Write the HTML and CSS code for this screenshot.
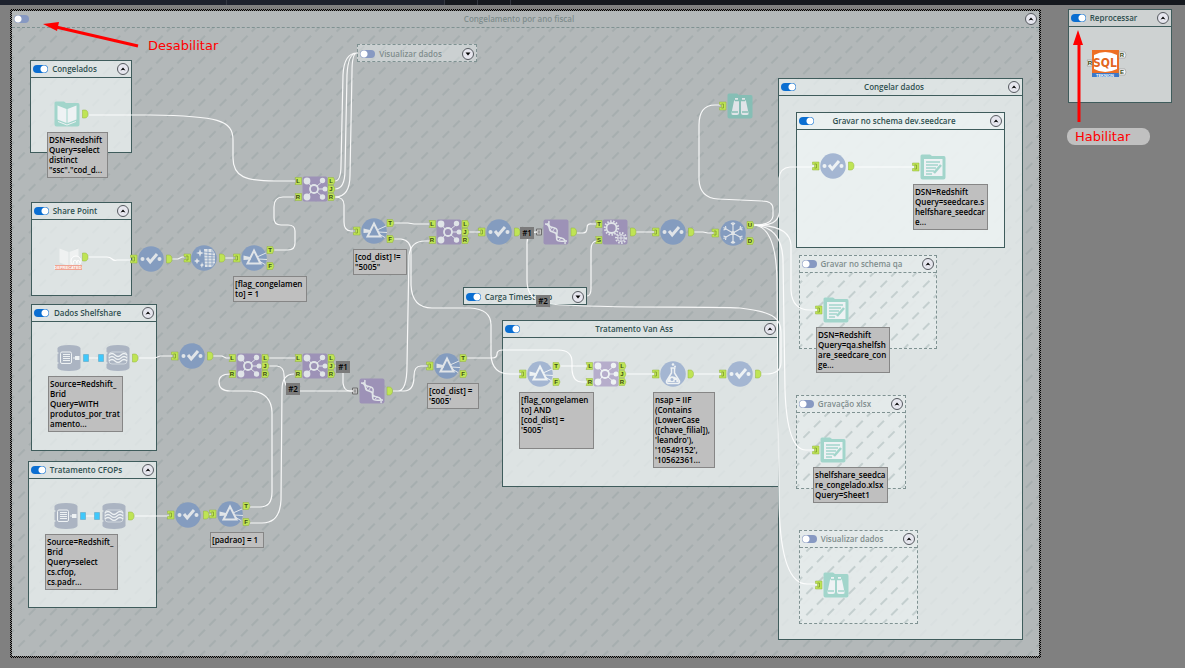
FILE: index.html
```html
<!DOCTYPE html>
<html lang="pt-BR">
<head>
<meta charset="utf-8">
<title>Congelamento por ano fiscal</title>
<link rel="stylesheet" href="styles.css">
</head>
<body>
<svg class="defs" aria-hidden="true">
  <defs>
    <pattern id="hatch" width="15" height="15" patternUnits="userSpaceOnUse" patternTransform="rotate(-45)">
      <path d="M2 7H11" class="hatch-line"/>
    </pattern>
    <g id="chev-up"><path d="M-4 2.5L0-2.5L4 2.5L0 1Z"/></g>
    <g id="chev-down"><path d="M-4-2.5L0 2.5L4-2.5Z"/></g>

    <g id="port-in"><path class="port" d="M-3-4H3.5V4H-3V1.5H-1V-1.5H-3Z"/><path class="port-mark" d="M-1-2H1V2H-1"/></g>
    <g id="port-out"><path class="port" d="M-2.5-4H0C4-4 4 4 0 4H-2.5Z"/></g>
    <g id="tag-in"><path class="port" d="M-3.5-3.5H3V3.5H-3.5L-2 0Z"/></g>
    <g id="tag-out"><path class="port" d="M-3-3.5H2.5L4 0L2.5 3.5H-3Z"/></g>
    <g id="port-multi"><path d="M-2.5-3H2.5V3H-2.5V1M-2.5-1V-3M0-1.5V1.5" class="multi"/></g>
    <g id="port-data"><path class="data" d="M-2.5-3.5H2.5V3.5H-2.5Z"/></g>

    <g id="select">
      <circle r="12.8" class="blue"/>
      <circle cx="-8.5" r="2" class="glyph"/><circle cx="8.5" r="2" class="glyph"/>
      <path class="line thick" d="M-4-1L-.8 3L6-5"/>
      <use href="#port-in" x="-17.5"/><use href="#port-out" x="18"/>
    </g>
    <g id="prism">
      <circle r="12.8" class="blue"/>
      <path class="glyph" d="M-10.5-2.5L-3-.8V1.5L-10.5 2Z"/>
      <path class="line fine" d="M3-1L12-5M4 1L13 1.500M5 3L11 6.500"/>
      <path class="line" d="M0-7.500L6.500 5.500H-6.500Z"/>
      <use href="#port-in" x="-17.5"/><use href="#tag-out" x="16" y="-8"/><use href="#tag-out" x="16" y="8"/>
    </g>
    <g id="cleanse">
      <circle r="12.8" class="blue"/>
      <path class="glyph" d="M-4-9L-3-6L0-5L-3-4L-4-1L-5-4L-8-5L-5-6ZM-7 0L-6 2L-4 3L-6 4L-7 6L-8 4L-10 3L-8 2ZM-2 4L-1.300 6L0 7L-1.500 8L-2 10L-3 8L-4 7L-2.500 6Z"/>
      <path class="glyph" d="M0-9H8L11-4V5L8 9H1Z"/>
      <path class="cut" d="M0-6L10-5M0-3L12-2M0 0H12M0 3H12M0 6H11M4-9V9M8-9V9"/>
      <use href="#port-in" x="-17"/><use href="#port-out" x="18"/>
    </g>
    <g id="unique">
      <circle r="12.8" class="blue"/>
      <g class="snow">
        <path d="M0-11V11M-9.500-5.500L9.500 5.500M-9.500 5.500L9.500-5.500M-2-10L0-8L2-10M-2 10L0 8L2 10M-9.500-3L-7-4L-7.500-7M9.500-3L7-4L7.500-7M-9.500 3L-7 4L-7.500 7M9.500 3L7 4L7.500 7"/>
      </g>
      <circle r="2" class="glyph"/>
      <use href="#port-in" x="-18"/><use href="#tag-out" x="17" y="-8"/><use href="#tag-out" x="17" y="8"/>
    </g>
    <g id="formula">
      <circle r="12.8" class="blue"/>
      <path class="line flask" d="M-2.500-6H2.500M-1.500-6V-1L-6.500 7Q-7 9.500-4 9.500H4Q7 9.500 6.500 7L1.500-1V-6"/>
      <path class="glyph" d="M-4 3Q0 1 4 4L6 8H-6Z"/><circle cx="0" cy="-9.500" r="1.300" class="glyph"/><circle cx="2" cy="-7.500" r="1" class="glyph"/>
      <circle cx="-1" cy="5.500" r="1.500" class="blue"/><circle cx="2.500" cy="7" r="1" class="blue"/>
      <use href="#port-in" x="-17.5"/><use href="#port-out" x="17.500"/>
    </g>
    <g id="join">
      <rect x="-12.5" y="-12.5" width="25" height="25" rx="2" class="purple"/>
      <path class="line fine" d="M-8-8L-4-3M-8 8L-4 3M2-3L8-8M3 0H10M2 3L8 8"/>
      <circle cx="-1" r="4" class="ring"/>
      <circle cx="-8" cy="-8" r="3.400" class="glyph"/><circle cx="-8" cy="8" r="3.400" class="glyph"/>
      <circle cx="7.500" cy="-8.500" r="2.700" class="glyph"/><circle cx="10" r="2.500" class="glyph"/><circle cx="7.500" cy="8" r="2.700" class="glyph"/>
      <use href="#tag-in" x="-16.5" y="-8"/><use href="#tag-in" x="-16.5" y="8"/>
      <use href="#tag-out" x="16" y="-8"/><use href="#tag-out" x="16"/><use href="#tag-out" x="16" y="8"/>
    </g>
    <g id="union">
      <rect x="-12.5" y="-12.5" width="25" height="25" rx="2" class="purple"/>
      <path class="line dna" d="M-7-11C-8-6-6-5-3-4.500S2-3 1 1S2 5.500 5 6S10 8 9 12M-11-8C-6-8-7-3-6-1.500S-1 0 0 1.500S0 6 1 8S6 9 11 9"/>
      <path class="line fine" d="M-9-9L-7.500-6.500M-6-2L-4-4.500M-3.500-.5L-1-4M1 6L3 5M3 8L5.500 6"/>
      <use href="#port-multi" x="-17"/><use href="#port-out" x="17.500"/>
    </g>
    <g id="append">
      <rect x="-12.5" y="-12.5" width="25" height="25" rx="2" class="purple"/>
      <circle cx="-3.500" cy="-4" r="5" class="ring"/><circle cx="-3.500" cy="-4" r="6.700" class="teeth"/>
      <circle cx="6" cy="6" r="3.500" class="ring small"/><circle cx="6" cy="6" r="5" class="teeth"/>
      <path class="line fine" d="M6 3V9M3 6H9"/>
      <use href="#tag-in" x="-16" y="-8"/><use href="#tag-in" x="-16" y="8"/><use href="#port-out" x="18"/>
    </g>
    <g id="folder"><path class="teal" d="M-12.500-11Q-12.500-12.500-11-12.500H-3L-1-11H11Q12.500-11 12.500-9V10.500Q12.500 12.500 10.500 12.500H-10.500Q-12.500 12.500-12.500 10.500Z"/></g>
    <path id="book" d="M-.5-5L-9.500-8.500V5.500L-.5 9ZM.5-5L9.500-8.500V5.500L.5 9Z"/>
    <g id="input"><use href="#folder"/><use href="#book" class="glyph"/><path class="line fine" d="M-9 7.500L0 11L9 7.500"/><use href="#port-out" x="18"/></g>
    <g id="output">
      <use href="#folder"/><rect x="-9" y="-8" width="18.500" height="17" class="glyph"/>
      <path class="pen" d="M-7-5H7M-7-2H5M-7 1H3M-7 4H1M-7 7H-1"/>
      <path class="pen nib" d="M8-2L1 6"/><use href="#port-in" x="-17.5"/>
    </g>
    <g id="browse">
      <use href="#folder"/>
      <path class="glyph" d="M-5-8H-2V-6L-1-5V7Q-1 9-3 9H-7Q-9 9-8.500 7L-6-5L-5-6ZM5-8H2V-6L1-5V7Q1 9 3 9H7Q9 9 8.500 7L6-5L5-6Z"/>
      <path class="pen" d="M-8 6H-2M2 6H8M-5-5.500H-1M1-5.500H5"/><use href="#port-in" x="-17.5"/>
    </g>
    <path id="drum" class="slate" d="M-11.500-10Q-10-13 0-13T11.500-10V10Q10 13 0 13T-11.500 10V6L-10 5L-11.500 4V-4L-10-5L-11.500-6Z"/>
    <g id="db-in">
      <use href="#drum"/><rect x="-8.500" y="-6" width="11" height="11.500" rx="1.500" class="ring small"/>
      <path class="line fine" d="M-6-3.500H1M-6-1.500H1M-6 .5H1M-6 2.500H1M4 0H7"/><rect x="6" y="-2" width="4.500" height="4" class="glyph"/>
      <use href="#port-data" x="17"/>
    </g>
    <g id="db-out">
      <use href="#drum"/><rect x="-9" y="-6" width="18" height="12" rx="3" class="wave"/>
      <path class="wave strong" d="M-9-3Q-6-6-3-3T3-3T9-3M-9 0Q-6-3-3 0T3 0T9 0M-9 3Q-6 0-3 3T3 3T9 3"/>
      <use href="#port-data" x="-17"/><use href="#port-out" x="17"/>
    </g>
  </defs>
</svg>

<div class="topbar" aria-hidden="true"><span></span><span></span><span></span><span></span></div>

<main class="canvas">
  <section class="box off outer"><header><input type="checkbox" id="t1"><label for="t1">Congelamento por ano fiscal</label><button type="button" aria-label="Recolher"><svg viewBox="-8 -8 16 16"><use href="#chev-up"/></svg></button></header><svg class="hatch"><rect width="100%" height="100%"/></svg></section>

  <section class="box congelados"><header><input type="checkbox" id="t2" checked><label for="t2">Congelados</label><button type="button" aria-label="Recolher"><svg viewBox="-8 -8 16 16"><use href="#chev-up"/></svg></button></header></section>
  <section class="box share"><header><input type="checkbox" id="t3" checked><label for="t3">Share Point</label><button type="button" aria-label="Recolher"><svg viewBox="-8 -8 16 16"><use href="#chev-up"/></svg></button></header></section>
  <section class="box shelf"><header><input type="checkbox" id="t4" checked><label for="t4">Dados Shelfshare</label><button type="button" aria-label="Recolher"><svg viewBox="-8 -8 16 16"><use href="#chev-up"/></svg></button></header></section>
  <section class="box cfops"><header><input type="checkbox" id="t5" checked><label for="t5">Tratamento CFOPs</label><button type="button" aria-label="Recolher"><svg viewBox="-8 -8 16 16"><use href="#chev-up"/></svg></button></header></section>
  <section class="box off closed view-top"><header><input type="checkbox" id="t6"><label for="t6">Visualizar dados</label><button type="button" aria-label="Expandir"><svg viewBox="-8 -8 16 16"><use href="#chev-down"/></svg></button></header></section>
  <section class="box closed carga"><header><input type="checkbox" id="t7" checked><label for="t7">Carga Timestamp</label><button type="button" aria-label="Expandir"><svg viewBox="-8 -8 16 16"><use href="#chev-down"/></svg></button></header></section>
  <section class="box vanass"><header><input type="checkbox" id="t8" checked><label for="t8">Tratamento Van Ass</label><button type="button" aria-label="Recolher"><svg viewBox="-8 -8 16 16"><use href="#chev-up"/></svg></button></header></section>
  <section class="box congelar"><header><input type="checkbox" id="t9" checked><label for="t9">Congelar dados</label><button type="button" aria-label="Recolher"><svg viewBox="-8 -8 16 16"><use href="#chev-up"/></svg></button></header></section>
  <section class="box dev"><header><input type="checkbox" id="t10" checked><label for="t10">Gravar no schema dev.seedcare</label><button type="button" aria-label="Recolher"><svg viewBox="-8 -8 16 16"><use href="#chev-up"/></svg></button></header></section>
  <section class="box off qa"><header><input type="checkbox" id="t11"><label for="t11">Gravar no schema qa</label><button type="button" aria-label="Recolher"><svg viewBox="-8 -8 16 16"><use href="#chev-up"/></svg></button></header><svg class="hatch"><rect width="100%" height="100%"/></svg></section>
  <section class="box off xlsx"><header><input type="checkbox" id="t12"><label for="t12">Gravação xlsx</label><button type="button" aria-label="Recolher"><svg viewBox="-8 -8 16 16"><use href="#chev-up"/></svg></button></header><svg class="hatch"><rect width="100%" height="100%"/></svg></section>
  <section class="box off view-end"><header><input type="checkbox" id="t13"><label for="t13">Visualizar dados</label><button type="button" aria-label="Recolher"><svg viewBox="-8 -8 16 16"><use href="#chev-up"/></svg></button></header><svg class="hatch"><rect width="100%" height="100%"/></svg></section>
  <section class="box reproc"><header><input type="checkbox" id="t14" checked><label for="t14">Reprocessar</label><button type="button" aria-label="Recolher"><svg viewBox="-8 -8 16 16"><use href="#chev-up"/></svg></button></header></section>

  <svg class="diagram" width="1185" height="668" viewBox="0 0 1185 668">
    <g class="wires">
      <path d="M89 115H150C218 116 233 120 233 140V158C233 177 246 181 275 181H295"/>
      <path d="M88 257H107Q110 257 112 259T117 260H131M172 259H178L182 257H184M225 258H233"/>
      <path d="M274 250H288Q295 250 295 243V231Q295 225 288 225H281Q274 225 274 218V207Q274 197 283 197H294"/>
      <path d="M335 181Q341 181 341 165L343 75Q344 53 357 53M335 189Q345 189 345 170L347 75Q348 53 357 53M335 197Q350 197 350 175L352 72Q352 53 357 53"/>
      <path d="M335 197Q344 197 344 205V222Q344 231 351 231H353"/>
      <path d="M394 223H408L414 224H429M394 239H401Q411 240 411 252V285Q412 308 432 308H470Q491 309 491 325V355Q492 374 510 374H519"/>
      <path d="M393 391H398Q407 391 407 365L409 255Q411 241 425 241H430M393 391H404Q414 391 414 376Q414 366 421 366H427"/>
      <path d="M467 232H480M519 232H537M537 232Q527 232 527 243V280Q527 297 540 301"/>
      <path d="M549 304C610 309 700 306 740 308C776 312 781 320 781 332V362Q781 374 766 374H760"/>
      <path d="M577 233H583Q587 233 587 228T592 224H596M587 296Q591 296 591 288V250Q591 241 597 241"/>
      <path d="M636 232H655M693 232H703L708 233H715"/>
      <path d="M754 225Q772 225 773 216V209Q773 201 762 201L718 199Q700 198 699 180V125Q699 105 715 105H720"/>
      <path d="M754 225Q779 227 779 212V178Q780 168 790 167H814"/>
      <path d="M754 225Q790 225 791 245V290Q792 310 810 310H817"/>
      <path d="M754 225Q782 227 783 260L785 390Q787 450 806 450H814"/>
      <path d="M754 225Q776 227 777 280L779 500Q780 584 807 584H817"/>
      <path d="M89 358H98M139 358H155L160 356H172M213 356H222L226 358H230"/>
      <path d="M268 358H295M268 366H277Q284 367 284 375Q284 387 291 390M299 391H354"/>
      <path d="M294 374Q282 374 282 390L281 500Q280 523 262 523H250"/>
      <path d="M230 374Q219 374 219 382Q219 391 230 391H248Q271 391 272 412V492Q272 507 260 507H250"/>
      <path d="M334 366H342M343 373V383Q344 391 350 391H354"/>
      <path d="M86 516H97M135 516H170M209 515H213"/>
      <path d="M467 358H492Q497 358 497 354T503 350H558Q572 350 572 362V370Q573 382 582 382H588"/>
      <path d="M560 366H588M626 374H656M693 374H722M853 167H915"/>
    </g>

    <g class="on-canvas">
      <use href="#select" x="151" y="259"/><use href="#cleanse" x="204" y="258"/><use href="#prism" x="254" y="258"/>
      <use href="#join" x="315" y="189"/><use href="#prism" x="374" y="231"/><use href="#join" x="449" y="232"/>
      <use href="#select" x="499" y="232"/><use href="#union" x="556" y="232"/><use href="#append" x="615" y="232"/>
      <use href="#select" x="673" y="232"/><use href="#unique" x="733" y="233"/><use href="#browse" x="740" y="106"/>
      <use href="#select" x="192" y="356"/><use href="#join" x="249" y="366"/><use href="#join" x="315" y="366"/>
      <use href="#union" x="372" y="391"/><use href="#prism" x="447" y="366"/>
      <use href="#select" x="188" y="515"/><use href="#prism" x="230" y="514"/>
    </g>
    <g class="in-box">
      <use href="#input" x="67" y="114"/>
      <use href="#db-in" x="69" y="358"/><use href="#db-out" x="118" y="358"/>
      <use href="#db-in" x="66" y="516"/><use href="#db-out" x="114" y="516"/>
      <use href="#prism" x="540" y="374"/><use href="#join" x="606" y="374"/><use href="#formula" x="673" y="374"/><use href="#select" x="740" y="374"/>
      <use href="#select" x="833" y="166"/><use href="#output" x="933" y="167"/>
      <use href="#output" x="836" y="310"/><use href="#output" x="833" y="450"/><use href="#browse" x="836" y="585"/>
      <use href="#book" x="69" y="257" class="pale"/><use href="#port-out" x="85" y="257"/>
      <circle cx="76" cy="261" r="5" class="people"/><path class="people" d="M73 264Q73 260 75 260T77 264M77 263Q77 260 78 260T80 263"/>
      <rect x="55" y="265" width="27" height="5" class="deprecated"/>
      <text x="68" y="269" class="tiny">DEPRECATED</text>
    </g>

    <g class="port-label">
      <text x="270" y="252">T</text><text x="270" y="268">F</text>
      <text x="298" y="183">L</text><text x="298" y="199">R</text><text x="331" y="183">L</text><text x="331" y="191">J</text><text x="331" y="199">R</text>
      <text x="390" y="225">T</text><text x="390" y="241">F</text>
      <text x="432" y="226">L</text><text x="432" y="242">R</text><text x="465" y="226">L</text><text x="465" y="234">J</text><text x="465" y="242">R</text>
      <text x="599" y="226">T</text><text x="599" y="242">S</text><text x="750" y="227">U</text><text x="750" y="243">D</text>
      <text x="232" y="360">L</text><text x="232" y="376">R</text><text x="265" y="360">L</text><text x="265" y="368">J</text><text x="265" y="376">R</text>
      <text x="298" y="360">L</text><text x="298" y="376">R</text><text x="331" y="360">L</text><text x="331" y="368">J</text><text x="331" y="376">R</text>
      <text x="463" y="360">T</text><text x="463" y="376">F</text><text x="246" y="508">T</text><text x="246" y="524">F</text>
      <text x="556" y="368">T</text><text x="556" y="384">F</text>
      <text x="590" y="368">L</text><text x="590" y="384">R</text><text x="622" y="368">L</text><text x="622" y="376">J</text><text x="622" y="384">R</text>
    </g>

    <g class="sql">
      <rect x="1092" y="50" width="27" height="27" class="sql-frame"/>
      <path class="sql-drum" d="M1094 55Q1105 49 1117 55V69Q1105 75 1094 69Z"/>
      <text x="1105" y="67" class="sql-name">SQL</text>
      <rect x="1092" y="73" width="27" height="4" class="sql-band"/>
      <text x="1105" y="77" class="tiny">TEKNION</text>
      <path class="sql-port" d="M1087 60H1092V66H1087L1089 63ZM1119 52H1125L1126 55L1125 58H1119ZM1119 69H1125L1126 72L1125 75H1119Z"/>
      <g class="port-label"><text x="1090" y="65">R</text><text x="1122" y="57">R</text><text x="1122" y="74">E</text></g>
    </g>

    <g class="callout">
      <path class="shaft" d="M138 46L56 27"/><path d="M43 24L59 22L57 31Z"/>
      <path class="shaft" d="M1079 122V44"/><path d="M1078 30L1083 45H1073Z"/>
    </g>
  </svg>

  <span class="order o1">#1</span><span class="order o2">#2</span><span class="order o3">#1</span><span class="order o4">#2</span>

  <p class="note n-congelados">DSN=Redshift<br>Query=select<br>distinct<br>"ssc"."cod_d...</p>
  <p class="note n-flag">[flag_congelamen<br>to] = 1</p>
  <p class="note n-not5005">[cod_dist] !=<br>"5005"</p>
  <p class="note n-shelf">Source=Redshift_<br>Brid<br>Query=WITH<br>produtos_por_trat<br>amento...</p>
  <p class="note n-cfop">Source=Redshift_<br>Brid<br>Query=select<br>cs.cfop,<br>cs.padr...</p>
  <p class="note n-padrao">[padrao] = 1</p>
  <p class="note n-is5005">[cod_dist] =<br>'5005'</p>
  <p class="note n-van">[flag_congelamen<br>to] AND<br>[cod_dist] =<br>'5005'</p>
  <p class="note n-nsap">nsap = IIF<br>(Contains<br>(LowerCase<br>([chave_filial]),<br>'leandro'),<br>'10549152',<br>'10562361...</p>
  <p class="note n-dev">DSN=Redshift<br>Query=seedcare.s<br>helfshare_seedcar<br>e...</p>
  <p class="note n-qa">DSN=Redshift<br>Query=qa.shelfsh<br>are_seedcare_con<br>ge...</p>
  <p class="note n-xlsx">shelfshare_seedca<br>re_congelado.xlsx<br>Query=Sheet1</p>

  <p class="remark off-remark">Desabilitar</p>
  <p class="remark on-remark">Habilitar</p>
</main>
</body>
</html>
```
FILE: styles.css
```css
* { box-sizing: border-box; }

body {
  margin: 0;
  background: #808080;
  font-family: "Open Sans", "Noto Sans", sans-serif;
  font-size: 8px;
  line-height: 10px;
}

.defs { position: absolute; width: 0; height: 0; }

/* Application bar above the canvas */
.topbar {
  position: absolute;
  inset: 0 0 auto 0;
  display: flex;
  height: 5px;
  background: #15181e;
}
.topbar span { width: 33px; border-right: 1px solid #343842; }
.topbar span:nth-child(1) { width: 227px; background: #1d212d; }
.topbar span:nth-child(2) { width: 218px; background: #1d212d; }

.canvas { position: relative; min-height: 100vh; overflow: hidden; }

/* Tool containers */
.box {
  position: absolute;
  display: flex;
  flex-direction: column;
  border: 1px solid #3f5c5c;
  background: rgba(240, 245, 245, 0.7);
}
.box header {
  display: flex;
  align-items: center;
  height: 17px;
  flex: none;
  padding: 0 2px;
  border-bottom: 1px solid #3f5c5c;
}
.box.closed header { border-bottom: 0; }
.box label {
  flex: 1;
  margin-right: 16px;
  text-align: center;
  white-space: nowrap;
  font-weight: 600;
  color: #2f4f4f;
}
.box input {
  appearance: none;
  flex: none;
  width: 15px;
  height: 8px;
  margin: 0;
  border-radius: 4px;
  background: radial-gradient(circle at 11px 4px, #ffffff 3px, transparent 4px), #0a6ed1;
}
.box button {
  flex: none;
  width: 12px;
  height: 12px;
  padding: 0;
  border: 1px solid #55595f;
  border-radius: 50%;
  background: #e6e6ee;
}
.box button svg { display: block; width: 10px; height: 10px; }

.box.off { border: 1px dashed #7f9292; background: rgba(240, 245, 245, 0.4); }
.box.off header { border-bottom: 1px dashed #7f9292; }
.box.off.closed header { border-bottom: 0; }
.box.off label { color: #7f8d8d; }
.box.off input { background: radial-gradient(circle at 4px 4px, #ffffff 3px, transparent 4px), #8799c2; }

.hatch { display: block; width: 100%; flex: 1; min-height: 0; }
.hatch rect { fill: url(#hatch); }
.hatch-line { stroke: #2f4f4f; stroke-opacity: 0.35; stroke-width: 1; }

.box.outer {
  left: 10px; top: 9px; width: 1031px; height: 649px;
  border: 2px solid transparent;
  background:
    linear-gradient(#b3b8b9, #b3b8b9) padding-box,
    repeating-conic-gradient(#000000 0 25%, #808080 0 50%) 0 0 / 2px 2px border-box;
}
.outer .hatch { opacity: 0.5; }

.congelados { left: 30px; top: 60px; width: 102px; height: 93px; }
.share { left: 31px; top: 202px; width: 101px; height: 94px; }
.shelf { left: 31px; top: 304px; width: 126px; height: 147px; }
.cfops { left: 28px; top: 461px; width: 129px; height: 147px; }
.view-top { left: 357px; top: 44px; width: 120px; height: 18px; }
.carga { left: 463px; top: 287px; width: 124px; height: 18px; }
.vanass { left: 502px; top: 320px; width: 277px; height: 167px; }
.box.congelar { left: 778px; top: 78px; width: 245px; height: 562px; }
.dev { left: 796px; top: 112px; width: 209px; height: 136px; }
.qa { left: 799px; top: 255px; width: 138px; height: 94px; }
.xlsx { left: 796px; top: 395px; width: 110px; height: 94px; }
.view-end { left: 799px; top: 530px; width: 119px; height: 94px; }
.reproc { left: 1068px; top: 9px; width: 104px; height: 94px; }

/* Workflow drawing */
.diagram { position: absolute; left: 0; top: 0; pointer-events: none; }
.wires path { fill: none; stroke: #ffffff; stroke-width: 1.2; stroke-opacity: 0.9; }

.on-canvas { --blue: #849cbf; --purple: #9d92b7; --teal: #86beb5; --glyph: #e0e4e8; }
.in-box { --blue: #a4b6d2; --purple: #b6adcb; --teal: #a2d5cb; --glyph: #eef2f4; }
.blue { fill: var(--blue); }
.purple { fill: var(--purple); }
.teal { fill: var(--teal); }
.slate { fill: #abb4c2; }
.glyph { fill: var(--glyph); }
.line { fill: none; stroke: var(--glyph); stroke-width: 2; }
.line.thick { stroke-width: 3; }
.line.fine { stroke-width: 1; }
.line.flask, .line.dna { stroke-width: 1.5; }
.cut { fill: none; stroke: var(--blue); stroke-width: 0.8; }
.snow { fill: none; stroke: var(--glyph); stroke-width: 1.2; }
.ring { fill: none; stroke: var(--glyph); stroke-width: 1.8; }
.ring.small { stroke-width: 1; }
.teeth { fill: none; stroke: var(--glyph); stroke-width: 2; stroke-dasharray: 1.5 1.5; }
.pen { fill: none; stroke: var(--teal); stroke-width: 1.3; }
.pen.nib { stroke-width: 2.5; }
.wave { fill: none; stroke: #d9dfe5; stroke-width: 0.8; }
.wave.strong { stroke: #eef2f4; stroke-width: 1.2; }
.pale { fill: #eff1f1; }
.people { fill: #e7eaea; stroke: #ffffff; stroke-width: 1; }
.deprecated { fill: #f0a493; }
.tiny { fill: #ffffff; font: 700 4px "Liberation Sans", sans-serif; text-anchor: middle; }

.port { fill: #bfe455; stroke: #93b43c; stroke-width: 0.5; }
.port-mark { fill: none; stroke: #7d9c2e; stroke-width: 0.8; }
.multi { fill: #c4c4c4; stroke: #6e6e6e; stroke-width: 1; }
.data { fill: #3fc8fb; stroke: #5b9dbb; stroke-width: 0.5; }
.port-label { fill: #3c4d14; font: 700 6px "Liberation Sans", sans-serif; text-anchor: middle; }

.sql-frame { fill: #ee6f24; }
.sql-drum { fill: #ffffff; }
.sql-name { fill: #e2671f; font: 700 12px "DejaVu Sans Condensed", "Liberation Sans", sans-serif; text-anchor: middle; }
.sql-band { fill: #3c78c8; }
.sql-port { fill: #f4f4f4; stroke: #888888; stroke-width: 0.5; }

.callout path { fill: #ff0000; }
.callout .shaft { fill: none; stroke: #ff0000; stroke-width: 3; }

/* Connection order badges */
.order {
  position: absolute;
  width: 14px;
  height: 12px;
  line-height: 12px;
  text-align: center;
  font-weight: 600;
  background: #7b7b7b;
  color: #000000;
}
.o1 { left: 520px; top: 227px; }
.o2 { left: 536px; top: 295px; }
.o3 { left: 336px; top: 361px; }
.o4 { left: 286px; top: 383px; }

/* Tool annotations */
.note {
  position: absolute;
  margin: 0;
  padding: 2px 1px;
  border: 1px solid #868686;
  background: #bfbfbf;
  color: #000000;
  font-weight: 600;
  white-space: nowrap;
}
.n-congelados { left: 47px; top: 132px; width: 61px; }
.n-flag { left: 233px; top: 276px; width: 74px; }
.n-not5005 { left: 353px; top: 249px; width: 54px; }
.n-shelf { left: 48px; top: 376px; width: 75px; }
.n-cfop { left: 45px; top: 534px; width: 73px; }
.n-padrao { left: 210px; top: 532px; width: 54px; }
.n-is5005 { left: 427px; top: 383px; width: 52px; }
.n-van { left: 519px; top: 392px; width: 75px; min-height: 57px; }
.n-nsap { left: 653px; top: 392px; width: 62px; }
.n-dev { left: 913px; top: 184px; width: 75px; }
.n-qa { left: 816px; top: 327px; width: 74px; }
.n-xlsx { left: 813px; top: 467px; width: 75px; }

/* Red remarks */
.remark {
  position: absolute;
  margin: 0;
  font: 13px/17px "DejaVu Sans", sans-serif;
  color: #ff0000;
}
.off-remark { left: 148px; top: 37px; }
.on-remark {
  left: 1067px;
  top: 128px;
  padding: 0 20px 0 8px;
  border-radius: 8px;
  background: #c0c0c0;
}
```
